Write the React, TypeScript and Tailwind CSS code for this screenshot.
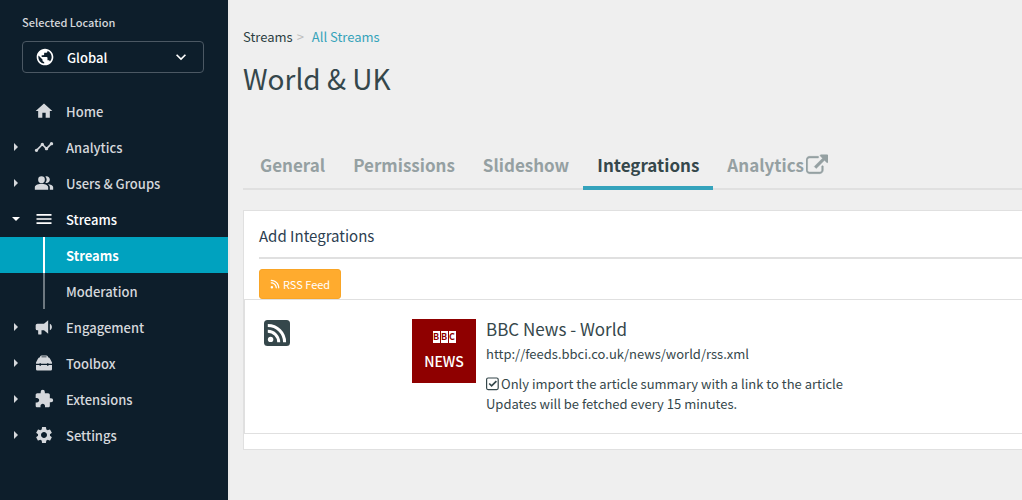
import type { ReactNode } from "react";
import {
  MdExtension,
  MdHome,
  MdKeyboardArrowDown,
  MdMenu,
  MdPeopleAlt,
  MdPublic,
  MdSettings,
  MdTimeline,
} from "react-icons/md";
import { FaRss } from "react-icons/fa6";

function BullhornIcon() {
  return (
    <svg viewBox="0 0 24 24" fill="currentColor" className="size-5" aria-hidden="true">
      <path d="M12 8H4a2 2 0 0 0-2 2v4a2 2 0 0 0 2 2h1v4a1 1 0 0 0 1 1h2a1 1 0 0 0 1-1v-4h3l5 4V4l-5 4m9.500 4c0 1.710-.96 3.260-2.500 4V8c1.530.75 2.500 2.300 2.500 4z" />
    </svg>
  );
}

function ToolboxIcon() {
  return (
    <svg viewBox="0 0 20 20" fill="currentColor" className="size-5" aria-hidden="true">
      <path
        fillRule="evenodd"
        d="M7.500 2.500h5A1.500 1.500 0 0 1 14 4v.3c1 .2 1.700.8 2.200 1.700L18 9.500v1.300h-3.500v-.6H13v.6H7v-.6H5.500v.6H2V9.500L3.800 6C4.300 5.100 5 4.500 6 4.300V4a1.500 1.500 0 0 1 1.500-1.500zm0 1.100v.7h5v-.7zM2 11.900h3.500v.8H7v-.8h6v.8h1.500v-.8H18v4.300a1.300 1.300 0 0 1-1.300 1.300H3.300A1.300 1.300 0 0 1 2 16.200z"
      />
    </svg>
  );
}

function ExternalLinkIcon() {
  return (
    <svg viewBox="0 96 1792 1472" fill="currentColor" stroke="currentColor" strokeWidth="40" className="size-[22px]" aria-hidden="true">
      <path d="M1408 928v320q0 119-84.500 203.500T1120 1536H288q-119 0-203.500-84.500T0 1248V416q0-119 84.500-203.500T288 128h704q14 0 23 9t9 23v64q0 14-9 23t-23 9H288q-66 0-113 47t-47 113v832q0 66 47 113t113 47h832q66 0 113-47t47-113V928q0-14 9-23t23-9h64q14 0 23 9t9 23zm384-864v512q0 26-19 45t-45 19-45-19l-176-176-652 652q-10 10-23 10t-23-10L695 983q-10-10-10-23t10-23l652-652-176-176q-19-19-19-45t19-45 45-19h512q26 0 45 19t19 45z" />
    </svg>
  );
}

function RssSquareIcon() {
  return (
    <svg viewBox="0 0 26 26" className="mt-px size-[26px]" aria-hidden="true">
      <rect width="26" height="26" rx="3.500" fill="currentColor" />
      <circle cx="6.600" cy="19.400" r="2.700" fill="#fff" />
      <path d="M3.800 11.300a11 11 0 0 1 10.900 10.900M3.800 5.400a16.800 16.800 0 0 1 16.800 16.800" fill="none" stroke="#fff" strokeWidth="3" />
    </svg>
  );
}

function CheckIcon() {
  return (
    <svg viewBox="0 0 14 14" fill="none" stroke="currentColor" className="pointer-events-none col-start-1 row-start-1 size-3.5" aria-hidden="true">
      <rect x=".6" y="1" width="11.600" height="11.600" rx="1.500" strokeWidth="1.200" />
      <path d="M3.200 6.500 5.600 8.900l4.800-4.800" strokeWidth="1.700" />
    </svg>
  );
}

type Item = { label: string; icon: ReactNode; expandable?: boolean; open?: boolean };

const before: Item[] = [
  { label: "Home", icon: <MdHome className="size-5" /> },
  { label: "Analytics", icon: <MdTimeline className="size-5" />, expandable: true },
  { label: "Users & Groups", icon: <MdPeopleAlt className="size-5" />, expandable: true },
  { label: "Streams", icon: <MdMenu className="size-5" />, expandable: true, open: true },
];

const after: Item[] = [
  { label: "Engagement", icon: <BullhornIcon />, expandable: true },
  { label: "Toolbox", icon: <ToolboxIcon />, expandable: true },
  { label: "Extensions", icon: <MdExtension className="size-5" />, expandable: true },
  { label: "Settings", icon: <MdSettings className="size-5" />, expandable: true },
];

function Caret({ open }: { open?: boolean }) {
  return (
    <svg viewBox="0 0 8 8" fill="currentColor" className="size-2" aria-hidden="true">
      <path d={open ? "M0 2h8L4 6z" : "M2 0v8l4-4z"} />
    </svg>
  );
}

function NavItem({ item }: { item: Item }) {
  return (
    <li>
      <a
        href="#"
        className={`flex h-9 items-center pl-3 ${item.open ? "text-white" : "text-[#d5d8dc]"}`}
      >
        <span className="w-2">{item.expandable && <Caret open={item.open} />}</span>
        <span className="ml-3.5 flex w-8">{item.icon}</span>
        <span className="pt-0.5">{item.label}</span>
      </a>
    </li>
  );
}

const tabs = ["General", "Permissions", "Slideshow", "Integrations"];

export default function App() {
  return (
    <div className="flex min-h-screen bg-[#efefef] font-['Noto_Sans_CJK_JP',sans-serif] text-[13px] leading-5 text-[#35474b]">
      <aside className="w-57 shrink-0 bg-[#0d1e2b] pt-3 font-medium">
        <div className="pr-6 pl-5.5">
          <label htmlFor="location" className="block text-[11px] text-[#d5d8dc]">
            Selected Location
          </label>
          <div className="mt-[9px] flex h-8 items-center rounded border border-[#4b5863] pl-3 text-white">
            <MdPublic className="size-5 shrink-0" />
            <select id="location" className="ml-3 min-w-0 flex-1 appearance-none bg-transparent pt-0.5">
              <option>Global</option>
            </select>
            <MdKeyboardArrowDown className="mr-3 size-5 shrink-0" />
          </div>
        </div>
        <nav className="mt-5" aria-label="Main">
          <ul>
            {before.map((item) => (
              <NavItem key={item.label} item={item} />
            ))}
            <li>
              <a href="#" aria-current="page" className="flex h-9 bg-[#00a2bf] pl-[43px] font-bold text-white">
                <span className="flex items-center border-l-2 border-white pt-0.5 pl-[21px]">Streams</span>
              </a>
            </li>
            <li>
              <a href="#" className="flex h-9 pl-[43px] text-[#d5d8dc]">
                <span className="flex items-center border-l-2 border-[#6d7880] pt-0.5 pl-[21px]">Moderation</span>
              </a>
            </li>
            {after.map((item) => (
              <NavItem key={item.label} item={item} />
            ))}
          </ul>
        </nav>
      </aside>

      <main className="min-w-0 flex-1 border-l-2 border-[#e9e9e9] pt-[27px] pl-[13px]">
        <nav className="flex gap-1" aria-label="Breadcrumb">
          <a href="#" className="text-[#2c3e42]">Streams</a>
          <span className="text-[#bdbdbd]">&gt;</span>
          <a href="#" className="ml-1 text-[#35a3ba]">All Streams</a>
        </nav>
        <h1 className="mt-[11px] text-[28px] leading-10">World &amp; UK</h1>

        <nav className="mt-11 flex border-b-2 border-[#e0e0e0] pl-[3px] text-[17px] font-bold text-[#95a0a2]" aria-label="Stream sections">
          {tabs.map((tab) => (
            <a
              key={tab}
              href="#"
              className={`-mb-0.5 flex h-12 items-center border-b-4 px-3.5 pt-0.5 ${
                tab === "Integrations" ? "border-[#35a3bc] text-[#35474b]" : "border-transparent"
              }`}
            >
              {tab}
            </a>
          ))}
          <a href="#" className="-mb-0.5 flex h-12 items-center gap-0.5 border-b-4 border-transparent px-3.5 pt-0.5">
            Analytics
            <ExternalLinkIcon />
          </a>
        </nav>

        <section className="mt-5 border border-r-0 border-[#e0e0e0] bg-white pb-[15px]">
          <div className="pl-[15px]">
            <h2 className="border-b-2 border-[#e0e0e0] pt-[15px] pb-[11px] text-[15px] leading-5 text-[#2c3e50]">
              Add Integrations
            </h2>
            <button
              type="button"
              className="mt-2.5 flex h-[30px] items-center gap-[3px] rounded-[3px] border border-[#f9a526] bg-[#ffab2e] px-2.5 text-[11px] text-white"
            >
              <FaRss className="size-2.5" />
              RSS Feed
            </button>
          </div>
          <article className="flex border border-r-0 border-[#e0e0e0] pt-[19px] pb-[19px] pl-[19px]">
            <div className="w-37 shrink-0">
              <RssSquareIcon />
            </div>
            <div className="flex size-16 shrink-0 flex-col items-center bg-[#8f0000] pt-3 text-white">
              <div className="flex gap-px text-[9px] leading-3 font-bold text-[#8f0000]">
                <span className="w-[7px] bg-white text-center">B</span>
                <span className="w-[7px] bg-white text-center">B</span>
                <span className="w-[7px] bg-white text-center">C</span>
              </div>
              <div className="mt-1.5 text-[14px] leading-6 font-medium">NEWS</div>
            </div>
            <div className="min-w-0 pl-2.5">
              <h3 className="text-[17px]">BBC News - World</h3>
              <p className="mt-[5px]">http://feeds.bbci.co.uk/news/world/rss.xml</p>
              <label className="mt-2.5 flex items-center gap-px">
                <span className="grid">
                  <input type="checkbox" defaultChecked className="col-start-1 row-start-1 size-3.5 appearance-none" />
                  <CheckIcon />
                </span>
                Only import the article summary with a link to the article
              </label>
              <p>Updates will be fetched every 15 minutes.</p>
            </div>
          </article>
        </section>
      </main>
    </div>
  );
}
